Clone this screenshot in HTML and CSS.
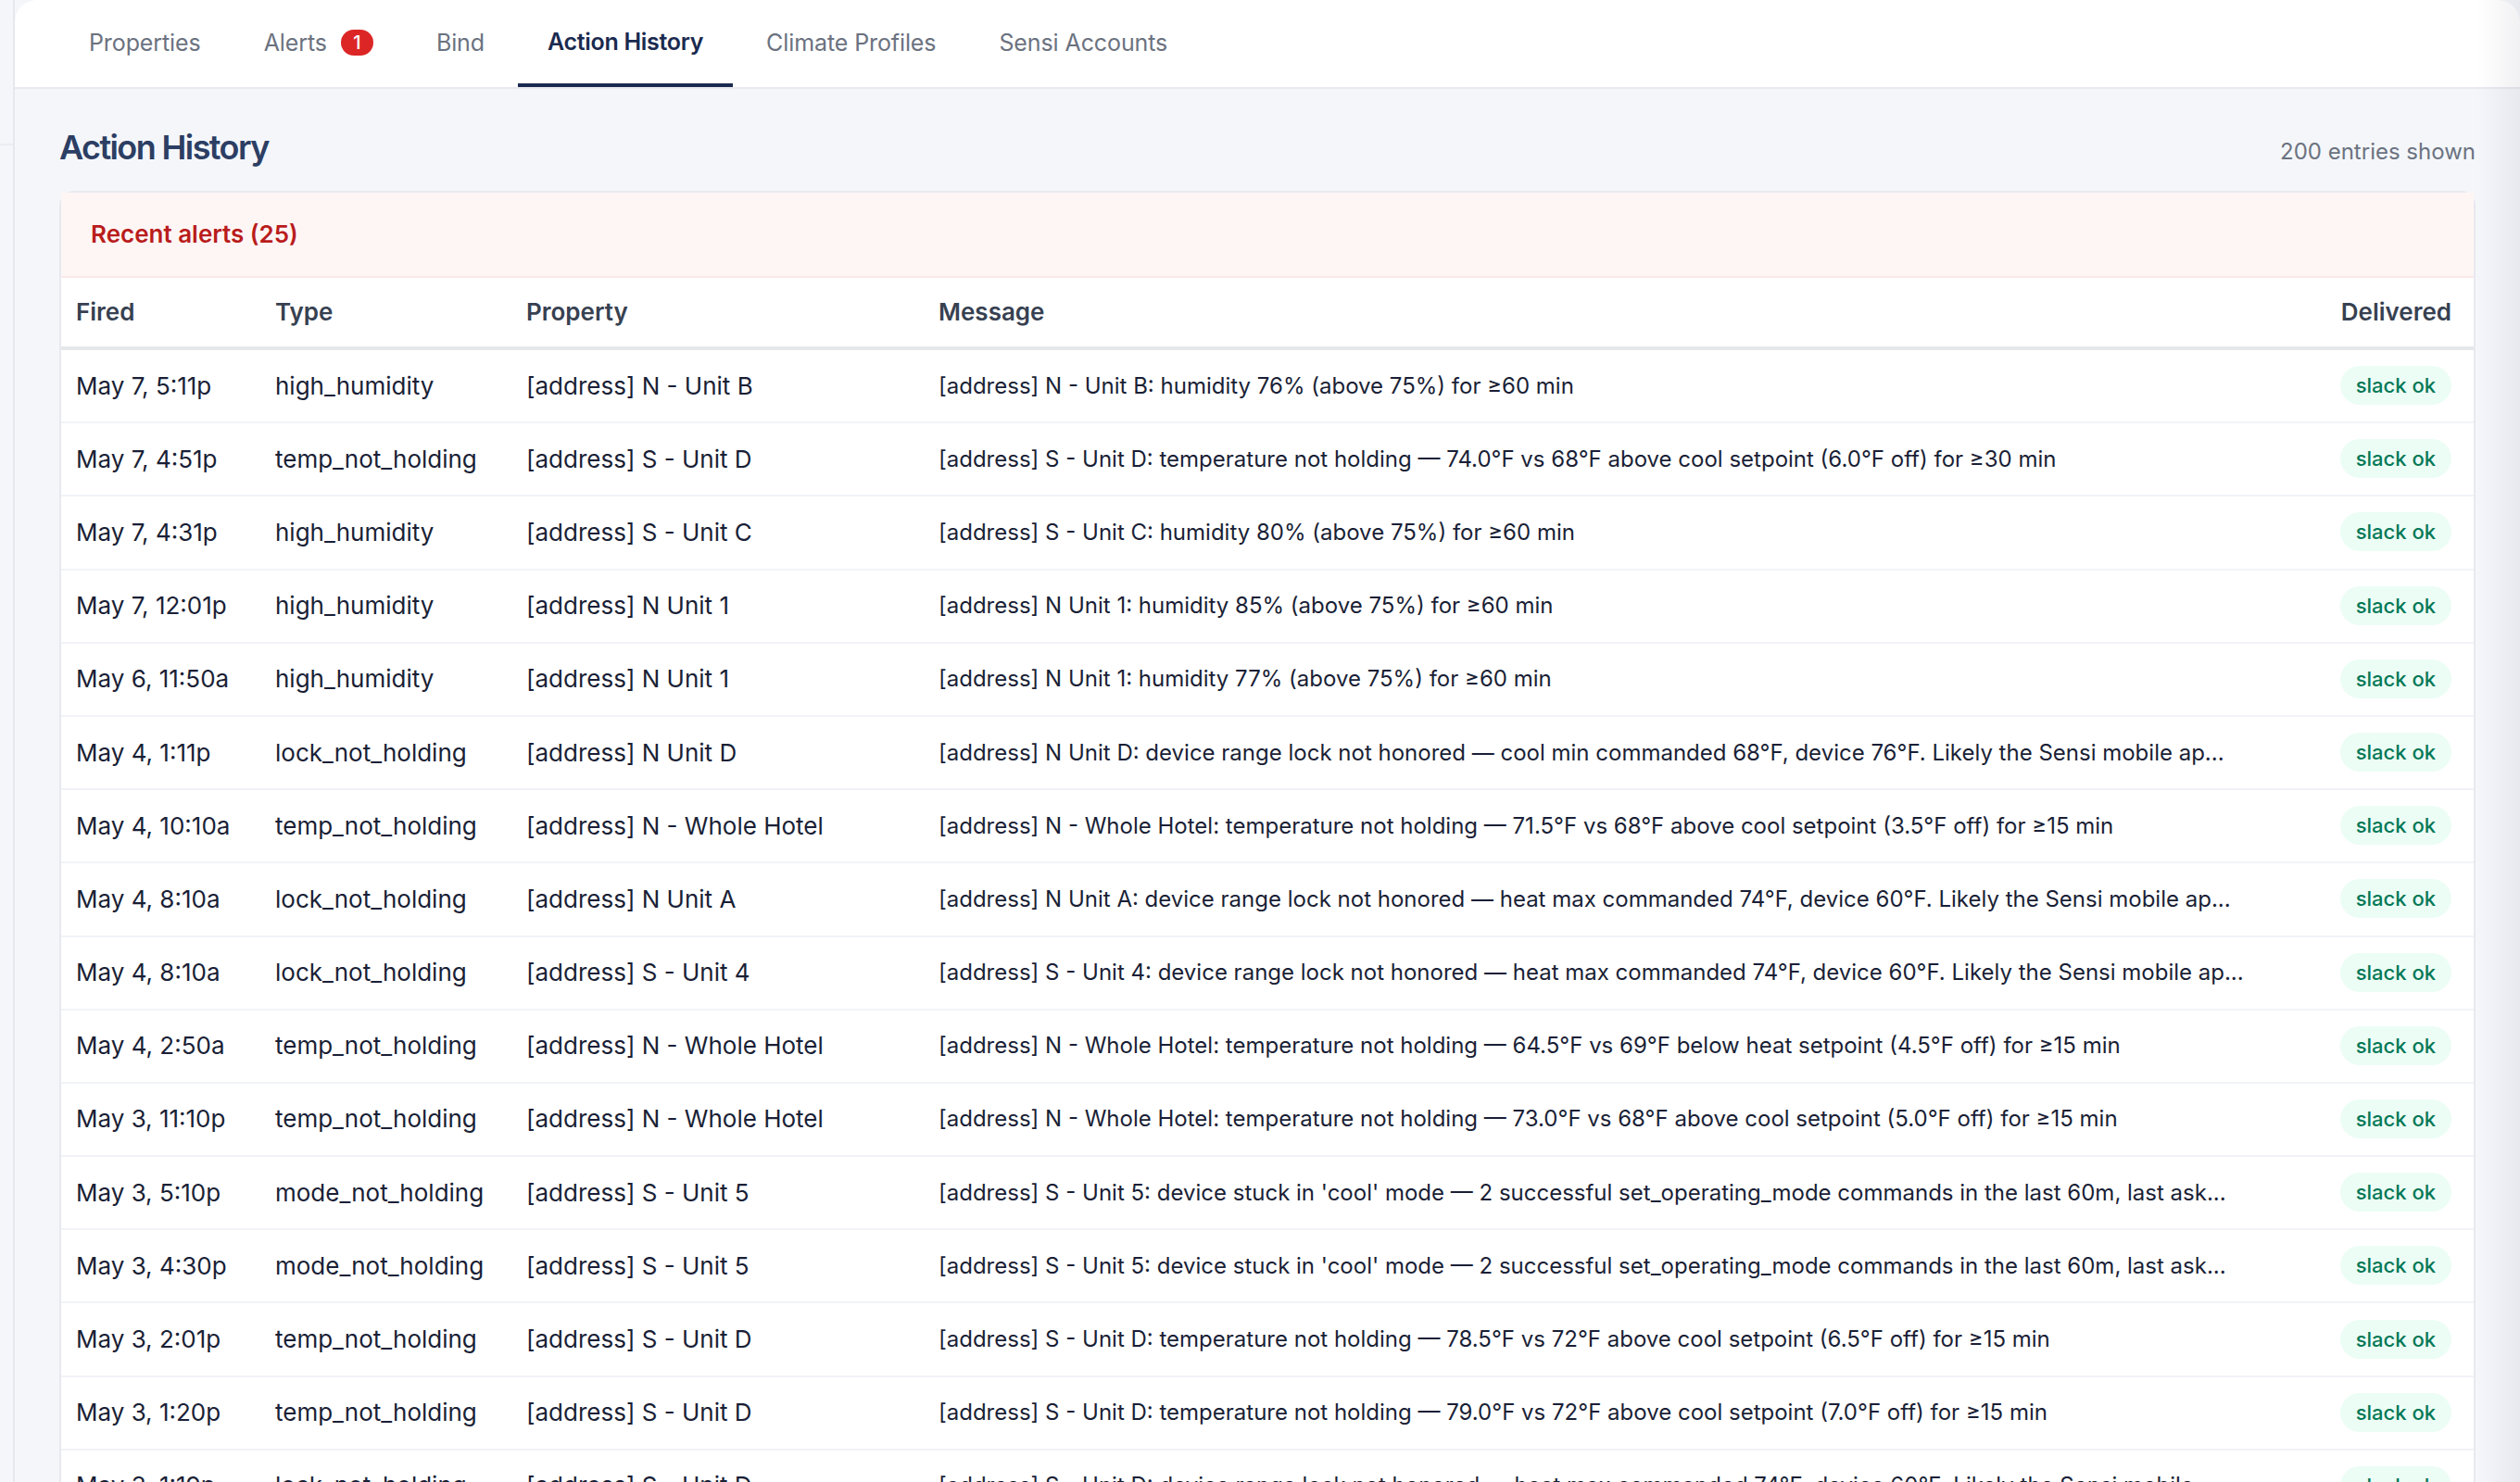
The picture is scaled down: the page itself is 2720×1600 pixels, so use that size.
FILE: index.html
```html
<!DOCTYPE html>
<html lang="en">
<head>
<meta charset="utf-8">
<title>Action History</title>
<link rel="stylesheet" href="styles.css">
</head>
<body>
<div class="app">
  <aside class="sidebar"><div class="side-top"></div></aside>
  <main class="main">
    <nav class="tabs">
      <a class="tab">Properties</a>
      <a class="tab">Alerts <span class="count">1</span></a>
      <a class="tab">Bind</a>
      <a class="tab active">Action History</a>
      <a class="tab">Climate Profiles</a>
      <a class="tab">Sensi Accounts</a>
    </nav>
    <section class="content">
      <header class="head">
        <h1>Action History</h1>
        <span class="shown">200 entries shown</span>
      </header>
      <div class="card">
        <div class="alert-bar">Recent alerts (25)</div>
        <table>
          <colgroup><col class="c1"><col class="c2"><col class="c3"><col class="c4"><col class="c5"></colgroup>
          <thead><tr><th>Fired</th><th>Type</th><th>Property</th><th>Message</th><th class="right">Delivered</th></tr></thead>
          <tbody>
            <tr><td>May 7, 5:11p</td><td>high_humidity</td><td>[address] N - Unit B</td><td class="msg">[address] N - Unit B: humidity 76% (above 75%) for ≥60 min</td><td class="right"><span class="ok">slack ok</span></td></tr>
            <tr><td>May 7, 4:51p</td><td>temp_not_holding</td><td>[address] S - Unit D</td><td class="msg">[address] S - Unit D: temperature not holding — 74.0°F vs 68°F above cool setpoint (6.0°F off) for ≥30 min</td><td class="right"><span class="ok">slack ok</span></td></tr>
            <tr><td>May 7, 4:31p</td><td>high_humidity</td><td>[address] S - Unit C</td><td class="msg">[address] S - Unit C: humidity 80% (above 75%) for ≥60 min</td><td class="right"><span class="ok">slack ok</span></td></tr>
            <tr><td>May 7, 12:01p</td><td>high_humidity</td><td>[address] N Unit 1</td><td class="msg">[address] N Unit 1: humidity 85% (above 75%) for ≥60 min</td><td class="right"><span class="ok">slack ok</span></td></tr>
            <tr><td>May 6, 11:50a</td><td>high_humidity</td><td>[address] N Unit 1</td><td class="msg">[address] N Unit 1: humidity 77% (above 75%) for ≥60 min</td><td class="right"><span class="ok">slack ok</span></td></tr>
            <tr><td>May 4, 1:11p</td><td>lock_not_holding</td><td>[address] N Unit D</td><td class="msg">[address] N Unit D: device range lock not honored — cool min commanded 68°F, device 76°F. Likely the Sensi mobile ap...</td><td class="right"><span class="ok">slack ok</span></td></tr>
            <tr><td>May 4, 10:10a</td><td>temp_not_holding</td><td>[address] N - Whole Hotel</td><td class="msg">[address] N - Whole Hotel: temperature not holding — 71.5°F vs 68°F above cool setpoint (3.5°F off) for ≥15 min</td><td class="right"><span class="ok">slack ok</span></td></tr>
            <tr><td>May 4, 8:10a</td><td>lock_not_holding</td><td>[address] N Unit A</td><td class="msg">[address] N Unit A: device range lock not honored — heat max commanded 74°F, device 60°F. Likely the Sensi mobile ap...</td><td class="right"><span class="ok">slack ok</span></td></tr>
            <tr><td>May 4, 8:10a</td><td>lock_not_holding</td><td>[address] S - Unit 4</td><td class="msg">[address] S - Unit 4: device range lock not honored — heat max commanded 74°F, device 60°F. Likely the Sensi mobile ap...</td><td class="right"><span class="ok">slack ok</span></td></tr>
            <tr><td>May 4, 2:50a</td><td>temp_not_holding</td><td>[address] N - Whole Hotel</td><td class="msg">[address] N - Whole Hotel: temperature not holding — 64.5°F vs 69°F below heat setpoint (4.5°F off) for ≥15 min</td><td class="right"><span class="ok">slack ok</span></td></tr>
            <tr><td>May 3, 11:10p</td><td>temp_not_holding</td><td>[address] N - Whole Hotel</td><td class="msg">[address] N - Whole Hotel: temperature not holding — 73.0°F vs 68°F above cool setpoint (5.0°F off) for ≥15 min</td><td class="right"><span class="ok">slack ok</span></td></tr>
            <tr><td>May 3, 5:10p</td><td>mode_not_holding</td><td>[address] S - Unit 5</td><td class="msg">[address] S - Unit 5: device stuck in 'cool' mode — 2 successful set_operating_mode commands in the last 60m, last ask...</td><td class="right"><span class="ok">slack ok</span></td></tr>
            <tr><td>May 3, 4:30p</td><td>mode_not_holding</td><td>[address] S - Unit 5</td><td class="msg">[address] S - Unit 5: device stuck in 'cool' mode — 2 successful set_operating_mode commands in the last 60m, last ask...</td><td class="right"><span class="ok">slack ok</span></td></tr>
            <tr><td>May 3, 2:01p</td><td>temp_not_holding</td><td>[address] S - Unit D</td><td class="msg">[address] S - Unit D: temperature not holding — 78.5°F vs 72°F above cool setpoint (6.5°F off) for ≥15 min</td><td class="right"><span class="ok">slack ok</span></td></tr>
            <tr><td>May 3, 1:20p</td><td>temp_not_holding</td><td>[address] S - Unit D</td><td class="msg">[address] S - Unit D: temperature not holding — 79.0°F vs 72°F above cool setpoint (7.0°F off) for ≥15 min</td><td class="right"><span class="ok">slack ok</span></td></tr>
            <tr><td>May 3, 1:19p</td><td>lock_not_holding</td><td>[address] S - Unit D</td><td class="msg">[address] S - Unit D: device range lock not honored — heat max commanded 74°F, device 60°F. Likely the Sensi mobile...</td><td class="right"><span class="ok">slack ok</span></td></tr>
          </tbody>
        </table>
      </div>
    </section>
    <div class="edge-shade"></div>
  </main>
</div>
</body>
</html>
```
FILE: styles.css
```css
* { box-sizing: border-box; }
html, body { margin: 0; height: 100%; overflow: hidden; }
body { background: #f4f6fa; font-family: Inter, "Liberation Sans", sans-serif; color: #1a1f36; }
.app { display: flex; height: 1600px; overflow: hidden; }
.sidebar { width: 16px; flex: none; border-right: 2px solid #e6e8ee; background: #f4f6fa; }
.side-top { height: 157px; border-bottom: 2px solid #ebedf2; }
.main { flex: 1; min-width: 0; position: relative; overflow: hidden; }
.tabs { display: flex; gap: 4px; height: 96px; padding-left: 48px; background: #fff; border-bottom: 2px solid #e8e9ef; border-radius: 24px 24px 0 0; }
.tab { display: flex; align-items: center; gap: 15px; height: 94px; padding: 0 32px 3px; font-size: 25px; color: #6b7280; letter-spacing: -0.1px; }
.tab.active { color: #1a2a4f; font-weight: 600; border-bottom: 4px solid #1a2a4f; padding-bottom: 0; letter-spacing: -0.3px; }
.count { display: inline-flex; align-items: center; justify-content: center; width: 35px; height: 28px; border-radius: 14px; background: #dc2626; color: #fff; font-size: 20px; font-weight: 500; }
.content { padding: 0 48px; }
.head { display: flex; justify-content: space-between; align-items: center; height: 110px; padding-top: 16px; }
h1 { margin: 0; font-size: 36px; font-weight: 600; color: #2c3e63; letter-spacing: -1.6px; }
.shown { font-size: 24px; color: #6b7280; padding-top: 8px; }
.card { background: #fff; border: 2px solid #e8e9ef; border-radius: 16px 16px 0 0; border-bottom: 0; }
.alert-bar { height: 92px; display: flex; align-items: center; padding: 0 0 1px 32px; background: #fef6f5; border-bottom: 2px solid #fbe9e9; color: #b91c1c; font-size: 26px; font-weight: 600; }
table { width: 100%; table-layout: fixed; border-collapse: separate; border-spacing: 0; }
.c1 { width: 215px; }
.c2 { width: 271px; }
.c3 { width: 445px; }
.c5 { width: 170px; }
th { height: 78px; padding: 0 0 1px 16px; text-align: left; font-size: 26px; font-weight: 600; color: #374151; border-bottom: 4px solid #e5e7eb; }
td { height: 79.2px; padding: 0 0 1px 16px; font-size: 26px; color: #1a1f36; border-bottom: 2px solid #f1f3f7; white-space: nowrap; }
td.msg { font-size: 24px; }
.right { text-align: right; padding-right: 24px; }
.ok { display: inline-block; height: 42px; line-height: 42px; padding: 0 17px; border-radius: 21px; background: #ecfdf5; color: #047857; font-size: 22px; font-weight: 500; }
.edge-shade { position: absolute; top: 0; right: 0; bottom: 0; width: 46px; background: linear-gradient(to right, rgba(60,60,90,0), rgba(60,60,90,.07)); pointer-events: none; }
```
